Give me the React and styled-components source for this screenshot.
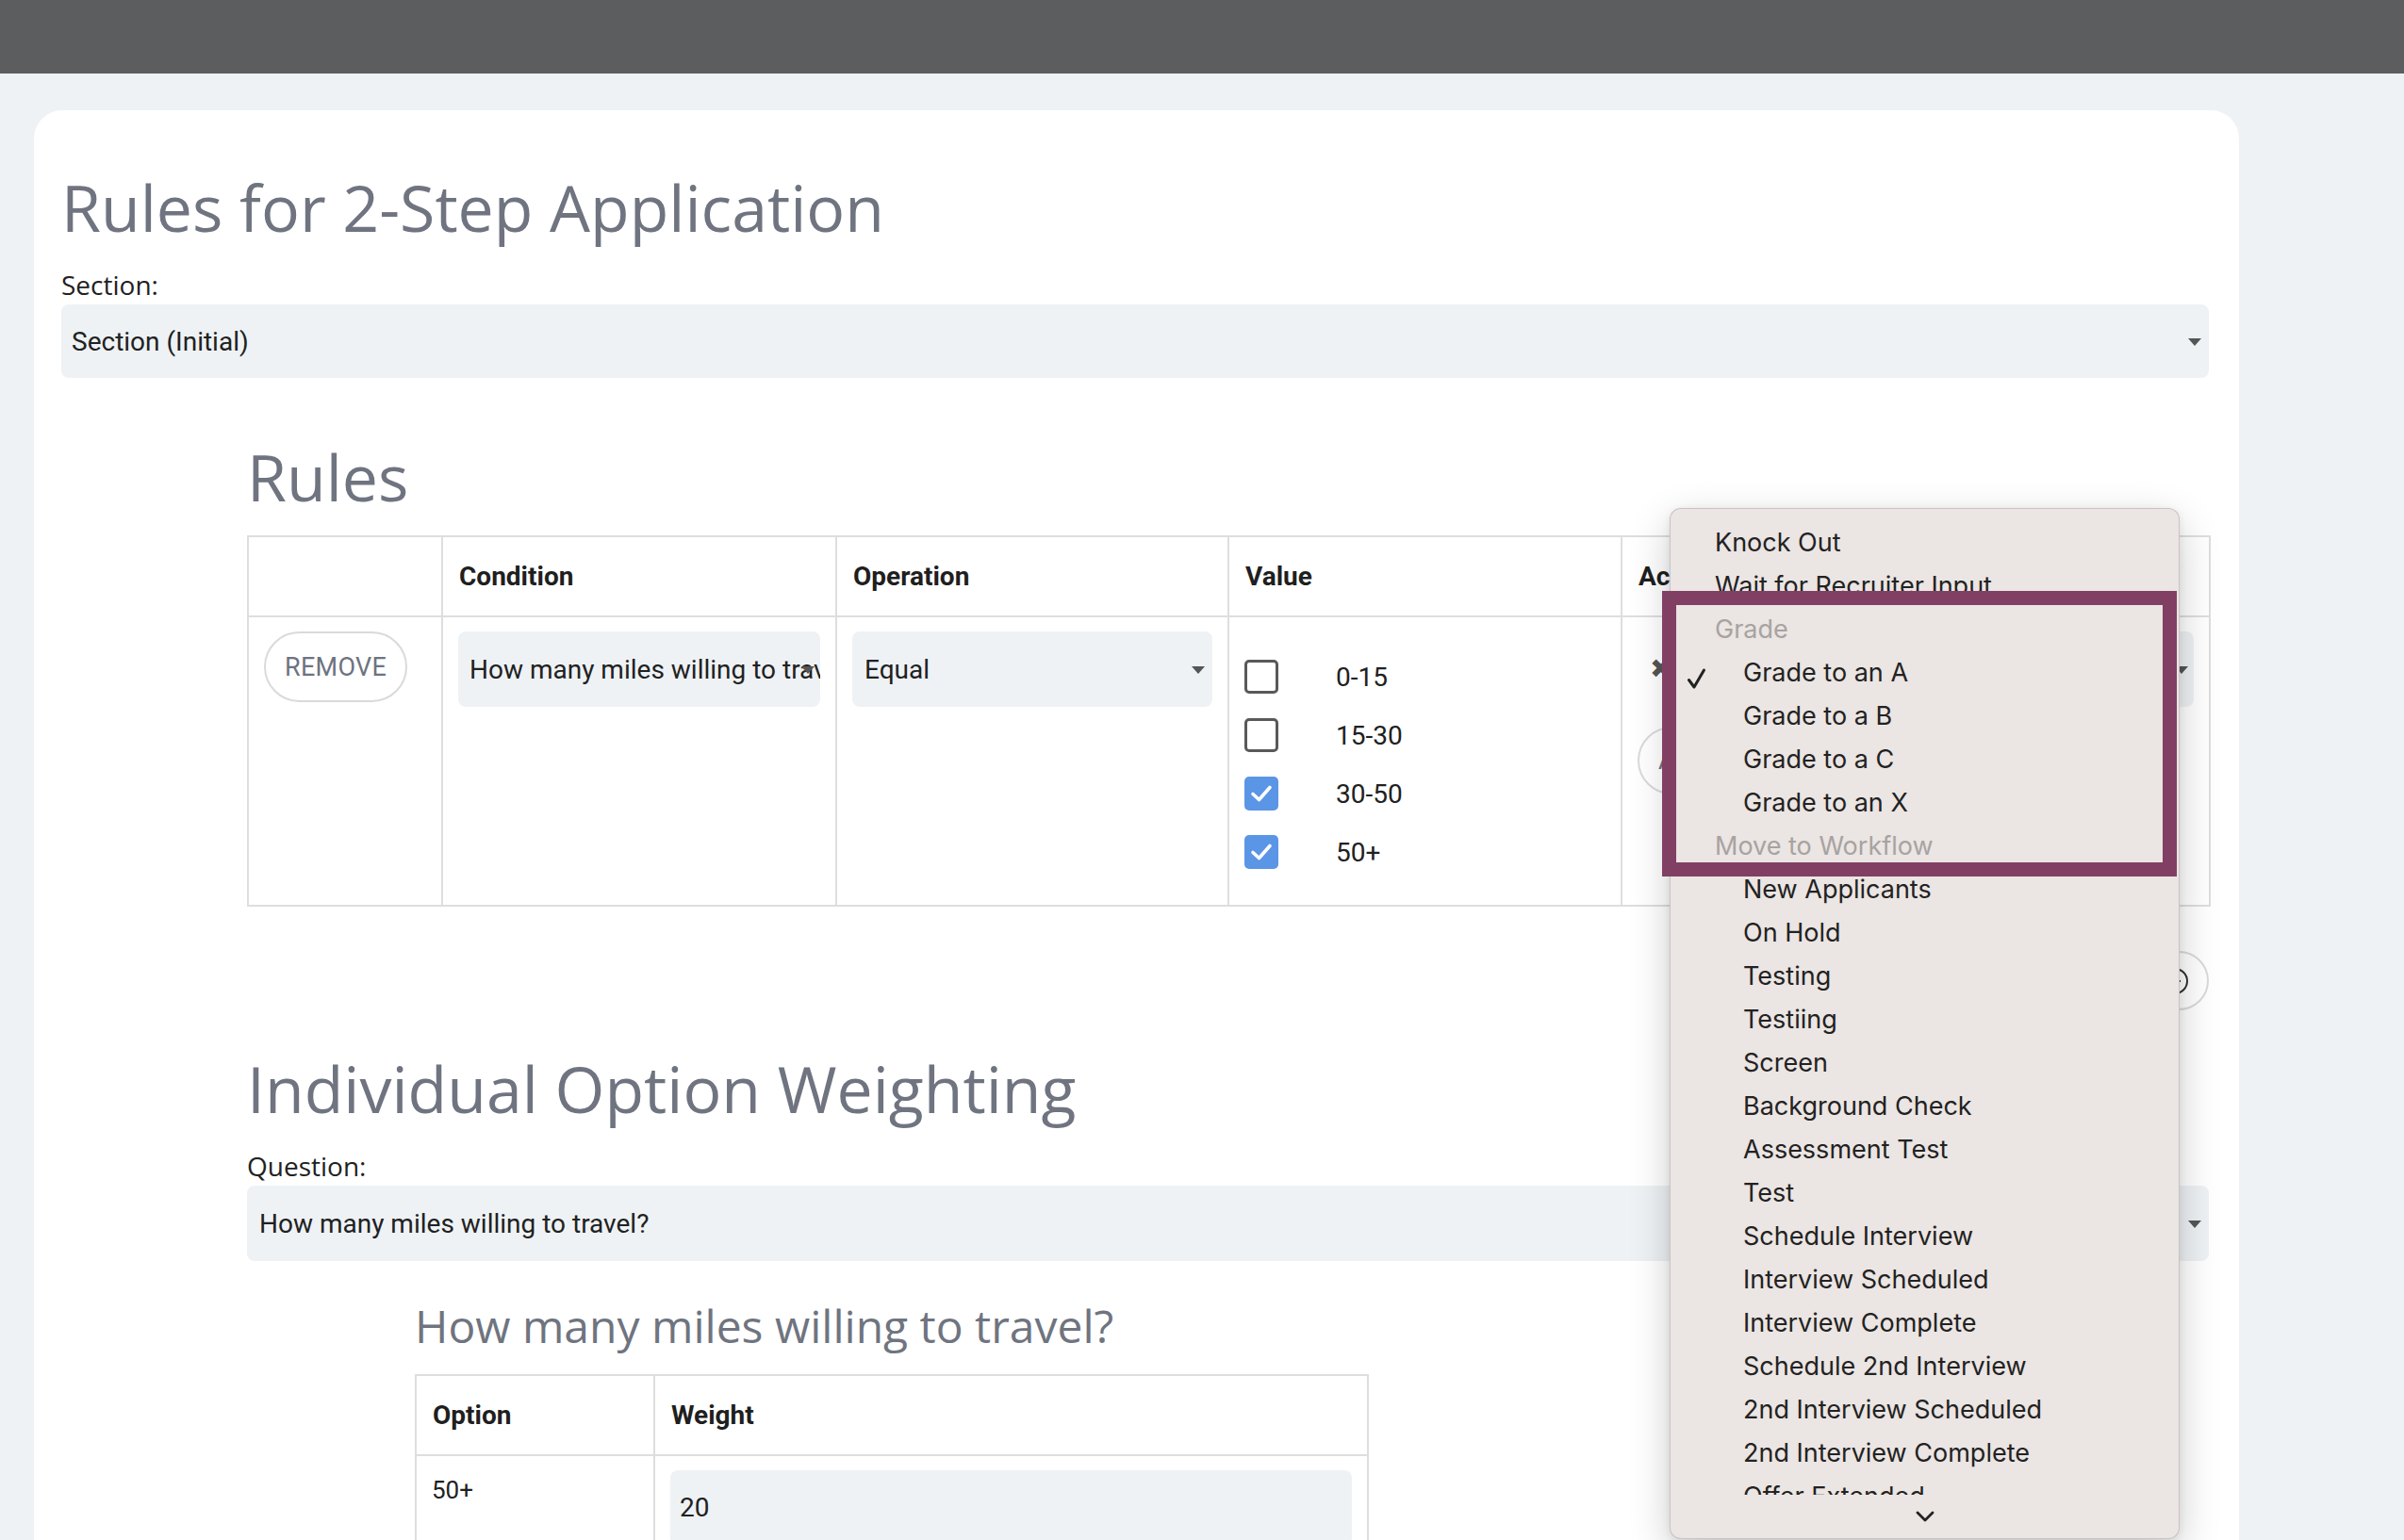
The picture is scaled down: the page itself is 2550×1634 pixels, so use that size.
import React from "react";
import styled, { createGlobalStyle } from "styled-components";

const GlobalStyle = createGlobalStyle`
  html, body { margin: 0; padding: 0; background: #eff2f5; }
  body { font-family: Roboto, "Open Sans", sans-serif; color: #212121; }
  * { box-sizing: border-box; }
`;

const Root = styled.div`
  position: relative;
  min-height: 1634px;
  overflow: hidden;
`;

const TopBar = styled.header`
  height: 78px;
  background: #5c5d5f;
`;

const Page = styled.div`
  padding: 39px 0 0 36px;
`;

const Card = styled.main`
  width: 2339px;
  background: #ffffff;
  border-radius: 30px 30px 0 0;
  padding: 61px 32px 120px 29px;
`;

const PageTitle = styled.h1`
  margin: 0;
  font: 400 68px/84px "Open Sans", sans-serif;
  color: #6f7480;
`;

const SectionTitle = styled.h2`
  margin: 0;
  font: 400 68px/84px "Open Sans", sans-serif;
  color: #6f7480;
`;

const SubTitle = styled.h3`
  margin: 0;
  font: 400 48px/1.2 "Open Sans", sans-serif;
  color: #6f7480;
`;

const FieldLabel = styled.div`
  margin-top: 19px;
  font: 400 28px/42px "Open Sans", sans-serif;
  color: #212121;
`;

const SelectBox = styled.div`
  position: relative;
  height: ${(p) => p.$h || 78}px;
  background: #eef2f5;
  border-radius: 8px;
  display: flex;
  align-items: center;
  padding: 0 ${(p) => p.$pr ?? 40}px 0 ${(p) => p.$pl || 11}px;
  font: 400 ${(p) => p.$fs || 28}px Roboto, sans-serif;
  color: #212121;
  white-space: nowrap;
  overflow: hidden;
  flex: ${(p) => (p.$grow ? 1 : "none")};
`;

const Caret = styled.span`
  position: absolute;
  right: ${(p) => p.$right || 8}px;
  top: 50%;
  margin-top: -3px;
  width: 0;
  height: 0;
  border-left: 7px solid transparent;
  border-right: 7px solid transparent;
  border-top: 8px solid #555;
`;

const Indented = styled.section`
  margin-left: ${(p) => p.$indent}px;
  margin-top: ${(p) => p.$top}px;
`;

const Table = styled.table`
  border-collapse: collapse;
  table-layout: fixed;
  width: ${(p) => p.$w}px;
  margin-top: ${(p) => p.$top || 20}px;
`;

const Th = styled.th`
  height: 85px;
  border: 2px solid #dedede;
  padding: 0 17px;
  text-align: left;
  font: 700 28px Roboto, sans-serif;
  color: #1f1f1f;
  white-space: nowrap;
  overflow: hidden;
`;

const Td = styled.td`
  height: ${(p) => p.$h || 307}px;
  border: 2px solid #dedede;
  padding: ${(p) => p.$pt || 15}px 16px 15px;
  vertical-align: top;
  font: 400 26px Roboto, sans-serif;
  color: #212121;
`;

const PillButton = styled.button`
  height: ${(p) => p.$h || 75}px;
  padding: 0 ${(p) => p.$px || 20}px;
  border: 2px solid #dadada;
  border-radius: 40px;
  background: #fff;
  font: 400 27px Roboto, sans-serif;
  color: #6e7380;
  letter-spacing: 0.3px;
  display: inline-flex;
  align-items: center;
  gap: 12px;
  cursor: pointer;
`;

const CheckList = styled.ul`
  list-style: none;
  margin: 17px 0 0;
  padding: 0;
`;

const CheckRow = styled.li`
  height: 62px;
  display: flex;
  align-items: center;
  gap: 61px;
  font: 400 28px Roboto, sans-serif;
  color: #212121;
`;

const Box = styled.span`
  width: 36px;
  height: 36px;
  border-radius: 5px;
  flex: none;
  display: flex;
  align-items: center;
  justify-content: center;
  border: ${(p) => (p.$checked ? "none" : "3px solid #595959")};
  background: ${(p) => (p.$checked ? "#5b95e6" : "#fff")};
`;

const ActionLine = styled.div`
  display: flex;
  align-items: center;
  gap: 18px;
`;

const RemoveX = styled.span`
  margin-left: 13px;
  font: 700 28px "DejaVu Sans", sans-serif;
  color: #555;
  line-height: 1;
`;

const ActionAdd = styled.div`
  margin-top: 21px;
`;

const RightRow = styled.div`
  display: flex;
  justify-content: flex-end;
  margin-top: 47px;
`;

const Menu = styled.div`
  position: absolute;
  left: 1771px;
  top: 539px;
  width: 541px;
  height: 1094px;
  background: #ebe5e3;
  border: 1px solid rgba(0, 0, 0, 0.14);
  border-radius: 12px;
  box-shadow: 0 14px 44px rgba(0, 0, 0, 0.2), 0 2px 8px rgba(0, 0, 0, 0.08);
  display: flex;
  flex-direction: column;
  overflow: hidden;
`;

const MenuList = styled.ul`
  list-style: none;
  margin: 0;
  padding: 19px 0 0;
  height: 1046px;
  overflow: hidden;
  flex: none;
`;

const MenuItem = styled.li`
  position: relative;
  height: 46px;
  line-height: 46px;
  padding-left: ${(p) => (p.$indent ? 77 : 47)}px;
  font: 400 27px Inter, Roboto, sans-serif;
  color: ${(p) => (p.$group ? "#a7a3a1" : "#222")};
  white-space: nowrap;
`;

const Tick = styled.span`
  position: absolute;
  left: 17px;
  top: 11px;
  width: 21px;
  height: 24px;
  display: flex;
`;

const MenuFooter = styled.div`
  flex: 1;
  display: flex;
  align-items: center;
  justify-content: center;
`;

const Highlight = styled.div`
  position: absolute;
  left: 1763px;
  top: 627px;
  width: 546px;
  height: 303px;
  border: 15px solid #823f64;
  pointer-events: none;
`;

const CheckMark = () => (
  <svg width="24" height="20" viewBox="0 0 24 20">
    <path d="M3 10.5 L9.5 16.5 L21 3.5" fill="none" stroke="#fff" strokeWidth="3.6" strokeLinecap="round" strokeLinejoin="round" />
  </svg>
);

const MenuTick = () => (
  <svg width="21" height="24" viewBox="0 0 21 24">
    <path d="M2.5 13.5 L8 21 L18.5 3" fill="none" stroke="#222" strokeWidth="3" strokeLinecap="round" strokeLinejoin="round" />
  </svg>
);

const Chevron = () => (
  <svg width="20" height="12" viewBox="0 0 20 12">
    <path d="M2 2 L10 10 L18 2" fill="none" stroke="#222" strokeWidth="2.8" strokeLinecap="round" strokeLinejoin="round" />
  </svg>
);

const CirclePlus = () => (
  <svg width="32" height="32" viewBox="0 0 32 32">
    <circle cx="16" cy="16" r="13" fill="none" stroke="#333" strokeWidth="2" />
    <path d="M16 10 V22 M10 16 H22" stroke="#333" strokeWidth="2" />
  </svg>
);

const values = [
  { label: "0-15", checked: false },
  { label: "15-30", checked: false },
  { label: "30-50", checked: true },
  { label: "50+", checked: true },
];

const menuItems = [
  { t: "Knock Out" },
  { t: "Wait for Recruiter Input" },
  { t: "Grade", group: true },
  { t: "Grade to an A", indent: true, checked: true },
  { t: "Grade to a B", indent: true },
  { t: "Grade to a C", indent: true },
  { t: "Grade to an X", indent: true },
  { t: "Move to Workflow", group: true },
  { t: "New Applicants", indent: true },
  { t: "On Hold", indent: true },
  { t: "Testing", indent: true },
  { t: "Testiing", indent: true },
  { t: "Screen", indent: true },
  { t: "Background Check", indent: true },
  { t: "Assessment Test", indent: true },
  { t: "Test", indent: true },
  { t: "Schedule Interview", indent: true },
  { t: "Interview Scheduled", indent: true },
  { t: "Interview Complete", indent: true },
  { t: "Schedule 2nd Interview", indent: true },
  { t: "2nd Interview Scheduled", indent: true },
  { t: "2nd Interview Complete", indent: true },
  { t: "Offer Extended", indent: true },
  { t: "Offer Accepted", indent: true },
];

export default function App() {
  return (
    <Root>
      <GlobalStyle />
      <TopBar />
      <Page>
        <Card>
          <PageTitle>Rules for 2-Step Application</PageTitle>
          <FieldLabel>Section:</FieldLabel>
          <SelectBox>
            Section (Initial)
            <Caret />
          </SelectBox>

          <Indented $indent={197} $top={63}>
            <SectionTitle>Rules</SectionTitle>
            <Table $w={2081}>
              <colgroup>
                <col style={{ width: 206 }} />
                <col style={{ width: 418 }} />
                <col style={{ width: 416 }} />
                <col style={{ width: 417 }} />
                <col style={{ width: 624 }} />
              </colgroup>
              <thead>
                <tr>
                  <Th />
                  <Th>Condition</Th>
                  <Th>Operation</Th>
                  <Th>Value</Th>
                  <Th>Action</Th>
                </tr>
              </thead>
              <tbody>
                <tr>
                  <Td>
                    <PillButton>REMOVE</PillButton>
                  </Td>
                  <Td>
                    <SelectBox $h={80} $pl={12} $pr={0}>
                      How many miles willing to travel?
                      <Caret $right={6} />
                    </SelectBox>
                  </Td>
                  <Td>
                    <SelectBox $h={80} $pl={13}>
                      Equal
                      <Caret />
                    </SelectBox>
                  </Td>
                  <Td>
                    <CheckList>
                      {values.map((v) => (
                        <CheckRow key={v.label}>
                          <Box $checked={v.checked}>{v.checked && <CheckMark />}</Box>
                          {v.label}
                        </CheckRow>
                      ))}
                    </CheckList>
                  </Td>
                  <Td>
                    <ActionLine>
                      <RemoveX>✖</RemoveX>
                      <SelectBox $h={80} $grow>
                        Grade to an A
                        <Caret $right={6} />
                      </SelectBox>
                    </ActionLine>
                    <ActionAdd>
                      <PillButton $h={72}>ADD ACTION</PillButton>
                    </ActionAdd>
                  </Td>
                </tr>
              </tbody>
            </Table>
            <RightRow>
              <PillButton $h={63} $px={18}>
                ADD RULE <CirclePlus />
              </PillButton>
            </RightRow>
          </Indented>

          <Indented $indent={197} $top={41}>
            <SectionTitle>Individual Option Weighting</SectionTitle>
            <FieldLabel>Question:</FieldLabel>
            <SelectBox $h={80} $pl={13}>
              How many miles willing to travel?
              <Caret />
            </SelectBox>

            <Indented $indent={178} $top={40}>
              <SubTitle>How many miles willing to travel?</SubTitle>
              <Table $w={1010} $top={22}>
                <colgroup>
                  <col style={{ width: 253 }} />
                  <col style={{ width: 757 }} />
                </colgroup>
                <thead>
                  <tr>
                    <Th>Option</Th>
                    <Th>Weight</Th>
                  </tr>
                </thead>
                <tbody>
                  <tr>
                    <Td $h={120} $pt={21}>50+</Td>
                    <Td $h={120}>
                      <SelectBox $h={80} $pl={10}>20</SelectBox>
                    </Td>
                  </tr>
                </tbody>
              </Table>
            </Indented>
          </Indented>
        </Card>
      </Page>

      <Menu>
        <MenuList>
          {menuItems.map((m) => (
            <MenuItem key={m.t} $indent={m.indent} $group={m.group}>
              {m.checked && (
                <Tick>
                  <MenuTick />
                </Tick>
              )}
              {m.t}
            </MenuItem>
          ))}
        </MenuList>
        <MenuFooter>
          <Chevron />
        </MenuFooter>
      </Menu>
      <Highlight />
    </Root>
  );
}
